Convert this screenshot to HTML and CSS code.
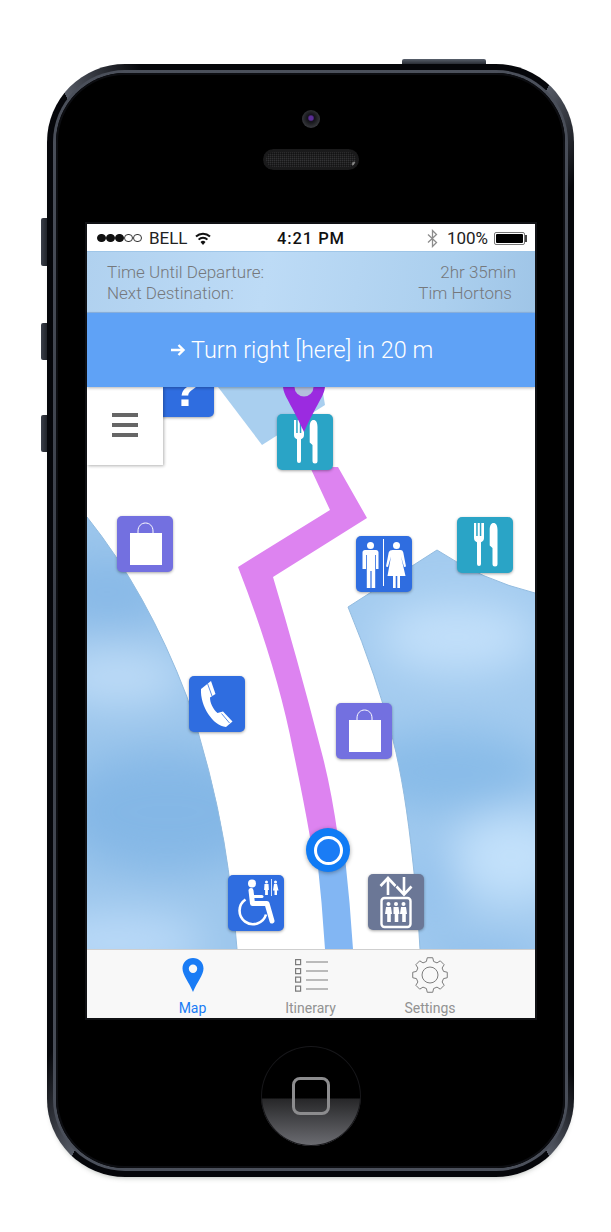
FILE: index.html
```html
<!DOCTYPE html>
<html lang="en">
<head>
<meta charset="utf-8">
<title>Indoor map</title>
<link rel="stylesheet" href="styles.css">
</head>
<body>
<svg class="sprite" width="0" height="0" aria-hidden="true">
  <defs>
    <symbol id="i-cutlery" viewBox="0 0 56 56">
      <path fill="#fff" d="M17 6h2.200v13h1.500V6h2.100v13h1.500V6H27v15c0 2.500-1.200 3.500-3 4.200V47a2 2 0 0 1-4 0V25.200c-1.800-.7-3-1.700-3-4.200z"/>
      <path fill="#fff" d="M36.500 6c2.500 0 4 2.500 4 7v34a2.500 2.500 0 0 1-5 0V31l-2.800-2.500V13c0-4.500 1.500-7 3.800-7z"/>
    </symbol>
    <symbol id="i-bag" viewBox="0 0 56 56">
      <path fill="#fff" d="M13 17h32v32H13z"/>
      <path fill="none" stroke="#fff" stroke-width="1" d="M21 17v-2c0-5 3.500-8 7.500-8s7.500 3 7.500 8v2"/>
    </symbol>
    <symbol id="i-restroom" viewBox="0 0 56 56">
      <circle fill="#fff" cx="14.500" cy="9.500" r="3.500"/>
      <path fill="#fff" d="M9 14h11c1.500 0 2.500 1 2.500 2.500V33H20V19h-.8v33h-3.600V35h-1.200v17h-3.600V19H10v14H6.500V16.500C6.500 15 7.500 14 9 14z"/>
      <path fill="#fff" d="M27 3h1v47h-1z"/>
      <circle fill="#fff" cx="40.500" cy="9.500" r="3.500"/>
      <path fill="#fff" d="M36.500 14h8c1.500 0 2.300.8 2.800 2.500l2.700 14-1.900.5-3.100-10.500L49.500 40H44v12h-2.700V40h-1.600v12H37V40h-5.500L35 20.500 31.900 31 30 30.500l2.700-14C33.200 14.800 35 14 36.500 14z"/>
    </symbol>
    <symbol id="i-phone" viewBox="0 0 56 56">
      <path fill="#fff" d="M12 13 22 5 26.500 18 21 21.500C21 27 24 33 28.500 37L34 35.500 43.500 45.500 37 51C24 50 11 30 12 13z"/>
      <path fill="none" stroke="#2f6de0" stroke-width=".8" d="M18.500 7.500 23 20M32.500 37.500 40.500 47"/>
    </symbol>
    <symbol id="i-wheelchair" viewBox="0 0 56 56">
      <circle fill="#fff" cx="24" cy="8.500" r="4"/>
      <path fill="none" stroke="#fff" stroke-width="5" stroke-linecap="round" stroke-linejoin="round" d="M23 15.500 24.500 28.500H39L44 46"/>
      <path fill="none" stroke="#fff" stroke-width="3" stroke-linecap="round" d="M25 21.500H34"/>
      <path fill="none" stroke="#fff" stroke-width="2.600" d="M17.500 24.500a13.500 13.500 0 1 0 20.500 15"/>
      <g fill="#fff">
        <circle cx="38.500" cy="7" r="1.500"/>
        <path d="M36.500 9h4l.4 6h-1v5h-2.800v-5h-1z"/>
        <path d="M43 4h.8v17H43z"/>
        <circle cx="47.500" cy="7" r="1.500"/>
        <path d="M46 9h3l1.500 6.500H49V20h-2.500v-4.500H45z"/>
      </g>
    </symbol>
    <symbol id="i-elevator" viewBox="0 0 56 56">
      <path fill="none" stroke="#fff" stroke-width="2.600" d="M20 21V5M12.500 12l7.500-8 7.500 8M36 3v17M28.500 12.500l7.500 8 7.500-8"/>
      <rect fill="none" stroke="#fff" stroke-width="2.400" x="13.500" y="24" width="29" height="29" rx="3"/>
      <g fill="#fff">
        <circle cx="20.500" cy="30" r="2"/><path d="M18 33h5l1 7h-1.200v8h-3.600v-8H17z"/>
        <circle cx="28" cy="30" r="2"/><path d="M25.500 33h5l1 7h-1.200v8h-3.600v-8h-1.200z"/>
        <circle cx="35.500" cy="30" r="2"/><path d="M33 33h5l1 7h-1.200v8h-3.600v-8H32z"/>
      </g>
    </symbol>
  </defs>
</svg>

<main class="phone">
  <span class="btn btn-power"></span>
  <span class="btn btn-mute"></span>
  <span class="btn btn-up"></span>
  <span class="btn btn-down"></span>
  <div class="rim">
    <div class="face">
      <div class="top-hardware">
        <span class="camera"></span>
        <span class="speaker"></span>
      </div>

      <section class="screen">
        <div class="status">
          <div class="status-left">
            <span class="dots"><i class="dot on"></i><i class="dot on"></i><i class="dot on"></i><i class="dot"></i><i class="dot"></i></span>
            <span>BELL</span>
            <svg class="wifi" viewBox="0 0 16 14" width="16" height="14"><path d="M8 14 5.500 11a3.500 3.500 0 0 1 5 0z" fill="#111"/><path d="M3.600 8.600a6.300 6.300 0 0 1 8.800 0M1 5.600a10.200 10.200 0 0 1 14 0" fill="none" stroke="#111" stroke-width="2"/></svg>
          </div>
          <div class="status-time">4:21 PM</div>
          <div class="status-right">
            <svg class="bt" viewBox="0 0 11 19" width="11" height="19"><path d="M1 5.500l8.500 8-4 4V1.500l4 4L1 13.500" fill="none" stroke="#8c8c8c" stroke-width="1.300"/></svg>
            <span class="pct">100%</span>
            <span class="battery"><span class="battery-fill"></span></span>
          </div>
        </div>

        <div class="trip">
          <span>Time Until Departure:</span><span class="trip-value">2hr 35min</span>
          <span>Next Destination:</span><span class="trip-value trip-inset">Tim Hortons</span>
        </div>

        <div class="banner">
          <svg class="turn" viewBox="0 0 15 12" width="15" height="12"><path d="M0 6h12M7.500 1l5 5-5 5" fill="none" stroke="#fff" stroke-width="2.400"/></svg>
          <span>Turn right [here] in 20 m</span>
        </div>

        <div class="map">
          <svg class="map-art" viewBox="0 0 448 562" width="448" height="562">
            <defs>
              <filter id="soft" x="-40%" y="-40%" width="180%" height="180%"><feGaussianBlur stdDeviation="22"/></filter>
              <clipPath id="left-area"><path d="M0 130Q60 205 100 310Q125 385 137 455Q146 510 150 562L0 562Z"/></clipPath>
              <clipPath id="right-area"><path d="M261 220L350 163Q395 193 448 206L448 562L333 562Q330 510 326 476Q318 400 306 353Q290 290 261 220Z"/></clipPath>
            </defs>
            <path fill="#a9cfef" d="M131 0 175 58 238 18 235 0Z"/>
            <g clip-path="url(#left-area)">
              <rect width="170" height="562" fill="#9cc6ec"/>
              <g filter="url(#soft)">
                <ellipse cx="20" cy="205" rx="70" ry="35" fill="#88b9e7"/>
                <ellipse cx="30" cy="290" rx="70" ry="26" fill="#c0ddf8"/>
                <ellipse cx="80" cy="425" rx="110" ry="60" fill="#84b7e6"/>
                <ellipse cx="30" cy="555" rx="90" ry="26" fill="#bddcf9"/>
              </g>
            </g>
            <g clip-path="url(#right-area)">
              <rect x="250" y="150" width="200" height="420" fill="#a3cbef"/>
              <g filter="url(#soft)">
                <ellipse cx="370" cy="250" rx="80" ry="35" fill="#c3e0fa"/>
                <ellipse cx="360" cy="385" rx="100" ry="40" fill="#88bbe8"/>
                <ellipse cx="425" cy="470" rx="60" ry="45" fill="#c3e1fb"/>
                <ellipse cx="345" cy="500" rx="25" ry="50" fill="#93c1ec"/>
                <ellipse cx="400" cy="575" rx="60" ry="18" fill="#8bbcea"/>
              </g>
            </g>
            <path class="edge" d="M0 130Q60 205 100 310Q125 385 137 455Q146 510 150 562"/>
            <path class="edge" d="M333 562Q330 510 326 476Q318 400 306 353Q290 290 261 220L350 163Q395 193 448 206"/>
            <path fill="#dd83f0" d="M223 80 243 123 151 180Q190 280 206 363Q216 410 223 450L251 450Q244 400 234 363Q210 270 186 190L280 131 251 80Z"/>
            <path fill="#82b6f3" d="M230 470 258 470Q263 515 266 562L238 562Q235 515 230 470Z"/>
          </svg>

          <div class="you"><span class="you-ring"></span></div>

          <div class="poi poi-blue poi-help"><span class="qmark">?</span></div>
          <div class="poi poi-teal poi-food-a"><svg class="glyph"><use href="#i-cutlery"/></svg></div>
          <div class="poi poi-violet poi-bag-a"><svg class="glyph"><use href="#i-bag"/></svg></div>
          <div class="poi poi-teal poi-food-b"><svg class="glyph"><use href="#i-cutlery"/></svg></div>
          <div class="poi poi-blue poi-wc"><svg class="glyph"><use href="#i-restroom"/></svg></div>
          <div class="poi poi-blue poi-phone"><svg class="glyph"><use href="#i-phone"/></svg></div>
          <div class="poi poi-violet poi-bag-b"><svg class="glyph"><use href="#i-bag"/></svg></div>
          <div class="poi poi-blue poi-access"><svg class="glyph"><use href="#i-wheelchair"/></svg></div>
          <div class="poi poi-slate poi-lift"><svg class="glyph"><use href="#i-elevator"/></svg></div>

          <svg class="dest-pin" viewBox="0 0 48 72" width="48" height="72"><path fill="#9b2be0" d="M24 2C11 2 3 11 3 23c0 9 8 17 21 46 13-29 21-37 21-46C45 11 37 2 24 2z"/><circle cx="24" cy="24" r="9.500" fill="#b3bfdc"/></svg>

          <div class="menu"><span class="menu-bar"></span><span class="menu-bar"></span><span class="menu-bar"></span></div>
        </div>

        <nav class="tabs">
          <div class="tab tab-active">
            <svg class="tab-icon" viewBox="0 0 36 36" width="36" height="36"><path fill="#1a7cf5" fill-rule="evenodd" d="M18 1c6 0 10.500 4.500 10.500 10.500C28.500 18 22 25 18 35 14 25 7.500 18 7.500 11.500 7.500 5.500 12 1 18 1zm0 6.500a4.200 4.200 0 1 0 0 8.400 4.200 4.200 0 0 0 0-8.400z"/></svg>
            <span>Map</span>
          </div>
          <div class="tab">
            <svg class="tab-icon" viewBox="0 0 36 36" width="36" height="36"><g fill="none" stroke="#7c7c7c" stroke-width="1.200"><path d="M2.600 2.600h5v5h-5zM2.600 11.600h5v5h-5zM2.600 20.100h5v5h-5zM2.600 29.100h5v5h-5z"/><path d="M13 5h22M13 14h22M13 23h22M13 32h22"/></g></svg>
            <span>Itinerary</span>
          </div>
          <div class="tab">
            <svg class="tab-icon" viewBox="-18 -18 36 36" width="36" height="36"><g fill="none" stroke="#7c7c7c" stroke-width="1"><path stroke-linejoin="round" d="M-3.620-13.520-2.740-17.280 2.740-17.280 3.620-13.520 7-12.120 10.290-14.160 14.160-10.290 12.120-7 13.520-3.620 17.280-2.740 17.280 2.740 13.520 3.620 12.120 7 14.160 10.290 10.290 14.160 7 12.120 3.620 13.520 2.740 17.280-2.740 17.280-3.620 13.520-7 12.120-10.290 14.160-14.160 10.290-12.120 7-13.520 3.620-17.280 2.740-17.280-2.740-13.520-3.620-12.120-7-14.160-10.290-10.290-14.160-7-12.120Z"/><circle r="8"/></g></svg>
            <span>Settings</span>
          </div>
        </nav>
      </section>

      <div class="bottom-hardware">
        <div class="home"><span class="home-square"></span></div>
      </div>
    </div>
  </div>
</main>
</body>
</html>
```

FILE: styles.css
```css
* { box-sizing: border-box; }

html, body {
  margin: 0;
  padding: 0;
  background: #fff;
}

body {
  width: 611px;
  height: 1232px;
  overflow: hidden;
  font-family: Roboto, "Liberation Sans", sans-serif;
}

.sprite { position: absolute; }

/* Device */
.phone {
  position: relative;
  width: 527px;
  height: 1113px;
  margin: 64px 0 0 47px;
  padding: 6px;
  border-radius: 78px;
  background: conic-gradient(
    #05060a 0deg 24deg, #565b66 24deg, #05060a 31deg 150deg,
    #565b66 156deg, #05060a 156deg 204deg,
    #565b66 204deg, #05060a 211deg 335deg,
    #565b66 335deg, #05060a 343deg 360deg);
  box-shadow: 0 4px 5px -3px rgba(70, 80, 70, .35);
}

.btn {
  position: absolute;
  background: linear-gradient(90deg, #3b404a, #20232a);
}
.btn-power {
  top: -5px;
  left: 355px;
  width: 84px;
  height: 5px;
  border-radius: 2px 2px 0 0;
  background: linear-gradient(#59606c, #2a2e36);
}
.btn-mute, .btn-up, .btn-down {
  left: -6px;
  width: 6px;
  border-radius: 2px 0 0 2px;
}
.btn-mute { top: 154px; height: 48px; }
.btn-up { top: 259px; height: 37px; }
.btn-down { top: 351px; height: 37px; }

.rim {
  height: 100%;
  padding: 3px;
  border-radius: 72px;
  background: linear-gradient(#4b505b, #3a3f49 50%, #4b505b);
}

.face {
  display: flex;
  flex-direction: column;
  align-items: flex-start;
  height: 100%;
  padding-left: 31px;
  border-radius: 69px;
  background: #000;
  box-shadow: inset 0 0 0 2px #0c0d11;
}

.top-hardware {
  display: flex;
  flex-direction: column;
  align-items: center;
  align-self: stretch;
  height: 151px;
  padding: 37px 31px 0 0;
  gap: 21px;
}

.camera {
  width: 18px;
  height: 18px;
  border-radius: 50%;
  background: radial-gradient(circle at 50% 45%, #5b2d96 0 2px, #15121d 3.500px, #1b1c20 5px, #34353a 9px);
}

.speaker {
  width: 96px;
  height: 21px;
  border-radius: 11px;
  background:
    radial-gradient(circle at 95% 72%, #8a8a8a 0 1.500px, transparent 3px),
    repeating-linear-gradient(90deg, rgba(0, 0, 0, .35) 0 1px, transparent 1px 2px),
    repeating-linear-gradient(0deg, rgba(0, 0, 0, .35) 0 1px, transparent 1px 2px),
    linear-gradient(#252526, #343436 50%, #28282a);
  box-shadow: inset 0 0 0 3px #1a1a1b;
}

/* Screen */
.screen {
  display: flex;
  flex-direction: column;
  width: 448px;
  height: 794px;
  background: #fff;
  box-shadow: 0 0 0 2px #101114;
}

.status {
  display: grid;
  grid-template-columns: 1fr auto 1fr;
  align-items: center;
  flex: 0 0 27px;
  padding: 1px 10px 0 10px;
  background: #fff;
  color: #222;
  font-size: 17px;
  font-weight: 400;
}

.status-left, .status-right {
  display: flex;
  align-items: center;
}
.status-left { gap: 7px; }
.status-right { justify-content: flex-end; }

.dots { display: flex; gap: .6px; }
.dot {
  width: 8.500px;
  height: 8.500px;
  border-radius: 50%;
  border: 1px solid #333;
}
.dot.on { background: #111; border-color: #111; }

.wifi { margin-left: 1px; }

.status-time {
  font-size: 16.500px;
  font-weight: 500;
  letter-spacing: .9px;
  color: #111;
}

.bt { margin-right: 9px; }
.pct { margin-right: 6px; }

.battery {
  position: relative;
  width: 31px;
  height: 13px;
  padding: 1px;
  border: 1px solid #777;
  border-radius: 2px;
}
.battery::after {
  content: "";
  position: absolute;
  top: 2px;
  right: -3px;
  width: 2px;
  height: 7px;
  background: #444;
}
.battery-fill {
  display: block;
  height: 100%;
  background: #000;
  border-radius: 1px;
}

.trip {
  display: grid;
  grid-template-columns: 1fr auto;
  grid-auto-rows: 21px;
  align-content: center;
  justify-items: start;
  flex: 0 0 62px;
  padding: 0 19px 0 20px;
  background: linear-gradient(100deg, #b0d1ef 0%, #bddbf6 40%, #abcfee 80%, #9fc5e7 100%);
  border-top: 1px solid #9fc6e8;
  color: #75787c;
  font-size: 17px;
  font-weight: 300;
  box-shadow: inset 0 -1px 0 #8fb8e6;
}
.trip-value { justify-self: end; }
.trip-inset { padding-right: 4px; }

.banner {
  position: relative;
  z-index: 3;
  display: flex;
  align-items: center;
  gap: 5px;
  flex: 0 0 74px;
  padding-left: 84px;
  background: #5fa2f6;
  color: #fff;
  font-size: 23.400px;
  font-weight: 300;
  box-shadow: 0 1px 3px rgba(0, 0, 0, .3);
}

/* Map */
.map {
  position: relative;
  flex: 0 0 562px;
  overflow: hidden;
  background: #fff;
}

.map-art { display: block; }

.edge {
  fill: none;
  stroke: #93bce0;
  stroke-width: 1;
}

.you {
  position: absolute;
  left: 219px;
  top: 441px;
  display: flex;
  align-items: center;
  justify-content: center;
  width: 44px;
  height: 44px;
  border-radius: 50%;
  background: #0f7bf5;
  box-shadow: 0 1px 4px rgba(0, 0, 0, .35);
}
.you-ring {
  width: 29px;
  height: 29px;
  border-radius: 50%;
  border: 3px solid #fff;
  background: #1a7cf5;
}

.poi {
  position: absolute;
  display: flex;
  align-items: center;
  justify-content: center;
  width: 56px;
  height: 56px;
  border-radius: 5px;
  box-shadow: 0 1px 3px rgba(0, 0, 0, .35);
}
.poi-blue { background: #2f6de0; }
.poi-teal { background: #2aa4c6; }
.poi-violet { background: #7370e0; }
.poi-slate { background: #6b7796; }

.glyph { display: block; width: 56px; height: 56px; }

.poi-help { left: 71px; top: -26px; }
.poi-food-a { left: 190px; top: 27px; }
.poi-bag-a { left: 30px; top: 129px; }
.poi-food-b { left: 370px; top: 130px; }
.poi-wc { left: 269px; top: 149px; }
.poi-phone { left: 102px; top: 289px; }
.poi-bag-b { left: 249px; top: 316px; }
.poi-access { left: 141px; top: 488px; }
.poi-lift { left: 281px; top: 487px; }

.qmark {
  font-family: "Liberation Sans", sans-serif;
  font-size: 50px;
  font-weight: 700;
  line-height: 56px;
  color: #fff;
}

.dest-pin {
  position: absolute;
  left: 193px;
  top: -24px;
}

.menu {
  position: absolute;
  left: 0;
  top: 0;
  display: flex;
  flex-direction: column;
  gap: 6px;
  width: 76px;
  height: 78px;
  padding: 26px 25px 0;
  background: #fff;
  box-shadow: 1px 1px 3px rgba(0, 0, 0, .3);
}
.menu-bar {
  height: 4px;
  background: #666;
}

/* Tab bar */
.tabs {
  display: grid;
  grid-template-columns: 119px 117px 122px;
  flex: 0 0 69px;
  padding-left: 46px;
  background: #f8f8f8;
  border-top: 1px solid #cfcfcf;
}

.tab {
  display: flex;
  flex-direction: column;
  align-items: center;
  padding-top: 7px;
  color: #929292;
  font-size: 14px;
  font-weight: 400;
  line-height: 16px;
}
.tab-active { color: #1a7cf5; }
.tab-icon { display: block; margin-bottom: 7px; }

/* Home */
.bottom-hardware {
  display: flex;
  justify-content: center;
  align-self: stretch;
  padding: 28px 31px 0 0;
}

.home {
  display: flex;
  align-items: center;
  justify-content: center;
  width: 100px;
  height: 100px;
  border-radius: 50%;
  background: linear-gradient(#000 0 52px, #272729 53px, #6c6d72);
  box-shadow: inset 0 0 0 1px #17171a;
}
.home-square {
  width: 38px;
  height: 38px;
  border: 3px solid #8c8c8e;
  border-radius: 8px;
}
```
